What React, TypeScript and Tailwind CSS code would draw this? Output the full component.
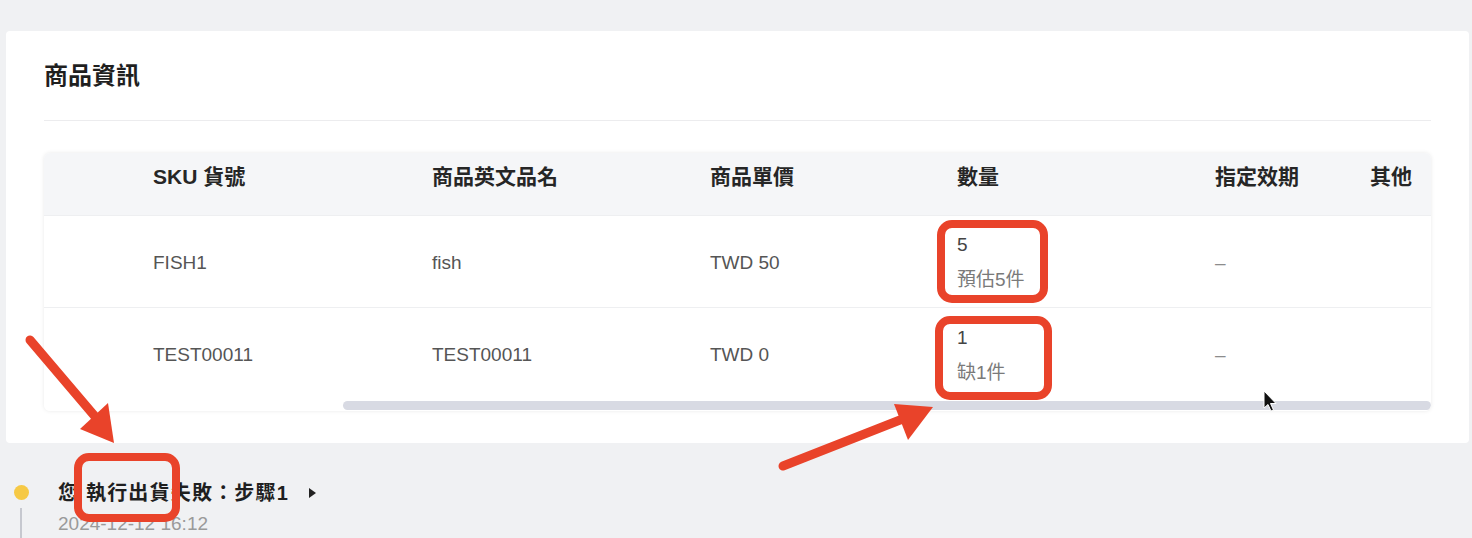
import React from "react";

interface Row {
  sku: string;
  name: string;
  price: string;
  qty: string;
  note: string;
  expiry: string;
}

const rows: Row[] = [
  { sku: "FISH1", name: "fish", price: "TWD 50", qty: "5", note: "預估5件", expiry: "–" },
  { sku: "TEST00011", name: "TEST00011", price: "TWD 0", qty: "1", note: "缺1件", expiry: "–" },
];

const cols = "grid grid-cols-[109px_279px_278px_247px_258px_155px_1fr]";

function Annotations() {
  const red = "#e9432a";
  return (
    <svg className="pointer-events-none absolute inset-0" width="1472" height="538" viewBox="0 0 1472 538">
      {/* highlight boxes */}
      <rect x="941" y="224" width="103" height="75" rx="11" fill="none" stroke={red} strokeWidth="8" />
      <rect x="939" y="320" width="109" height="76" rx="11" fill="none" stroke={red} strokeWidth="8" />
      <rect x="78" y="457" width="98" height="61" rx="11" fill="none" stroke={red} strokeWidth="8" />
      {/* arrow pointing at the step */}
      <path d="M30 340 L98 420" stroke={red} strokeWidth="9" strokeLinecap="round" />
      <path d="M80 429 L108 403 L114 443 Z" fill={red} />
      {/* arrow pointing at the scrollbar */}
      <path d="M783 466 L900 420" stroke={red} strokeWidth="9" strokeLinecap="round" />
      <path d="M894 404 L933 407 L908 440 Z" fill={red} />
      {/* mouse cursor */}
      <path
        d="M1264 391 L1264 408 L1268 404.5 L1271 411 L1273.5 410 L1270.5 403.5 L1276 403.5 Z"
        fill="#111"
        stroke="#fff"
        strokeWidth="1"
        strokeLinejoin="round"
      />
    </svg>
  );
}

export default function App() {
  return (
    <div className="relative h-[538px] w-[1472px] overflow-hidden bg-[#f0f1f3] font-['Liberation_Sans','Noto_Sans_CJK_TC',sans-serif]">
      <div className="pl-[6px] pr-[3px] pt-[31px]">
        {/* 商品資訊 card */}
        <div className="rounded-[4px] bg-white px-[38px] pb-[32px]">
          <div className="flex h-[89px] items-center pt-[1px]">
            <h2 className="text-[24px] font-bold text-[#1f1f1f]">商品資訊</h2>
          </div>
          <div className="h-px bg-[#ececee]" />

          <div className="mt-[32px] overflow-hidden rounded-[6px] bg-white shadow-[0_0_4px_rgba(0,0,0,0.09)]">
            {/* header */}
            <div className={`${cols} h-[62px] items-center bg-[#f5f6f8] text-[21px] font-bold text-[#262626]`}>
              <div />
              <div>SKU 貨號</div>
              <div>商品英文品名</div>
              <div>商品單價</div>
              <div>數量</div>
              <div>指定效期</div>
              <div>其他</div>
              <div />
            </div>

            {rows.map((r, i) => (
              <div
                key={r.sku}
                className={`${cols} items-center border-t border-[#eeeff1] text-[19px] text-[#555] pt-[11px] ${i === 0 ? "h-[92px]" : "h-[94px]"}`}
              >
                <div />
                <div>{r.sku}</div>
                <div>{r.name}</div>
                <div>{r.price}</div>
                <div className="flex flex-col gap-[7px] leading-[28px]">
                  <span className="text-[#444]">{r.qty}</span>
                  <span className="text-[#7a7a7a]">{r.note}</span>
                </div>
                <div className="text-[#8c8c8c]">{r.expiry}</div>
                <div />
                <div />
              </div>
            ))}

            {/* horizontal scrollbar */}
            <div className="h-[10px] bg-white">
              <div className="ml-[299px] h-[9px] rounded-full bg-[#d8dae3]" />
            </div>
          </div>
        </div>
      </div>

      {/* timeline */}
      <div className="flex pl-[14px] pt-[42px]">
        <div className="flex w-[14px] flex-col items-center">
          <div className="h-[15px] w-[15px] shrink-0 rounded-full bg-[#f6c945]" />
          <div className="mt-[8px] h-[40px] w-[2px] bg-[#c6c8cf]" />
        </div>
        <div className="ml-[30px] -mt-[7px] flex flex-col">
          <div className="flex items-center text-[20px] font-bold tracking-[1.2px] text-[#1f1f1f]">
            <span>您 執行出貨失敗：步驟1</span>
            <svg className="ml-[20px]" width="7" height="10" viewBox="0 0 7 10">
              <path d="M0 0 L7 5 L0 10 Z" fill="#222" />
            </svg>
          </div>
          <div className="mt-[2px] text-[19px] text-[#9a9a9a]">2024-12-12 16:12</div>
        </div>
      </div>

      <Annotations />
    </div>
  );
}
